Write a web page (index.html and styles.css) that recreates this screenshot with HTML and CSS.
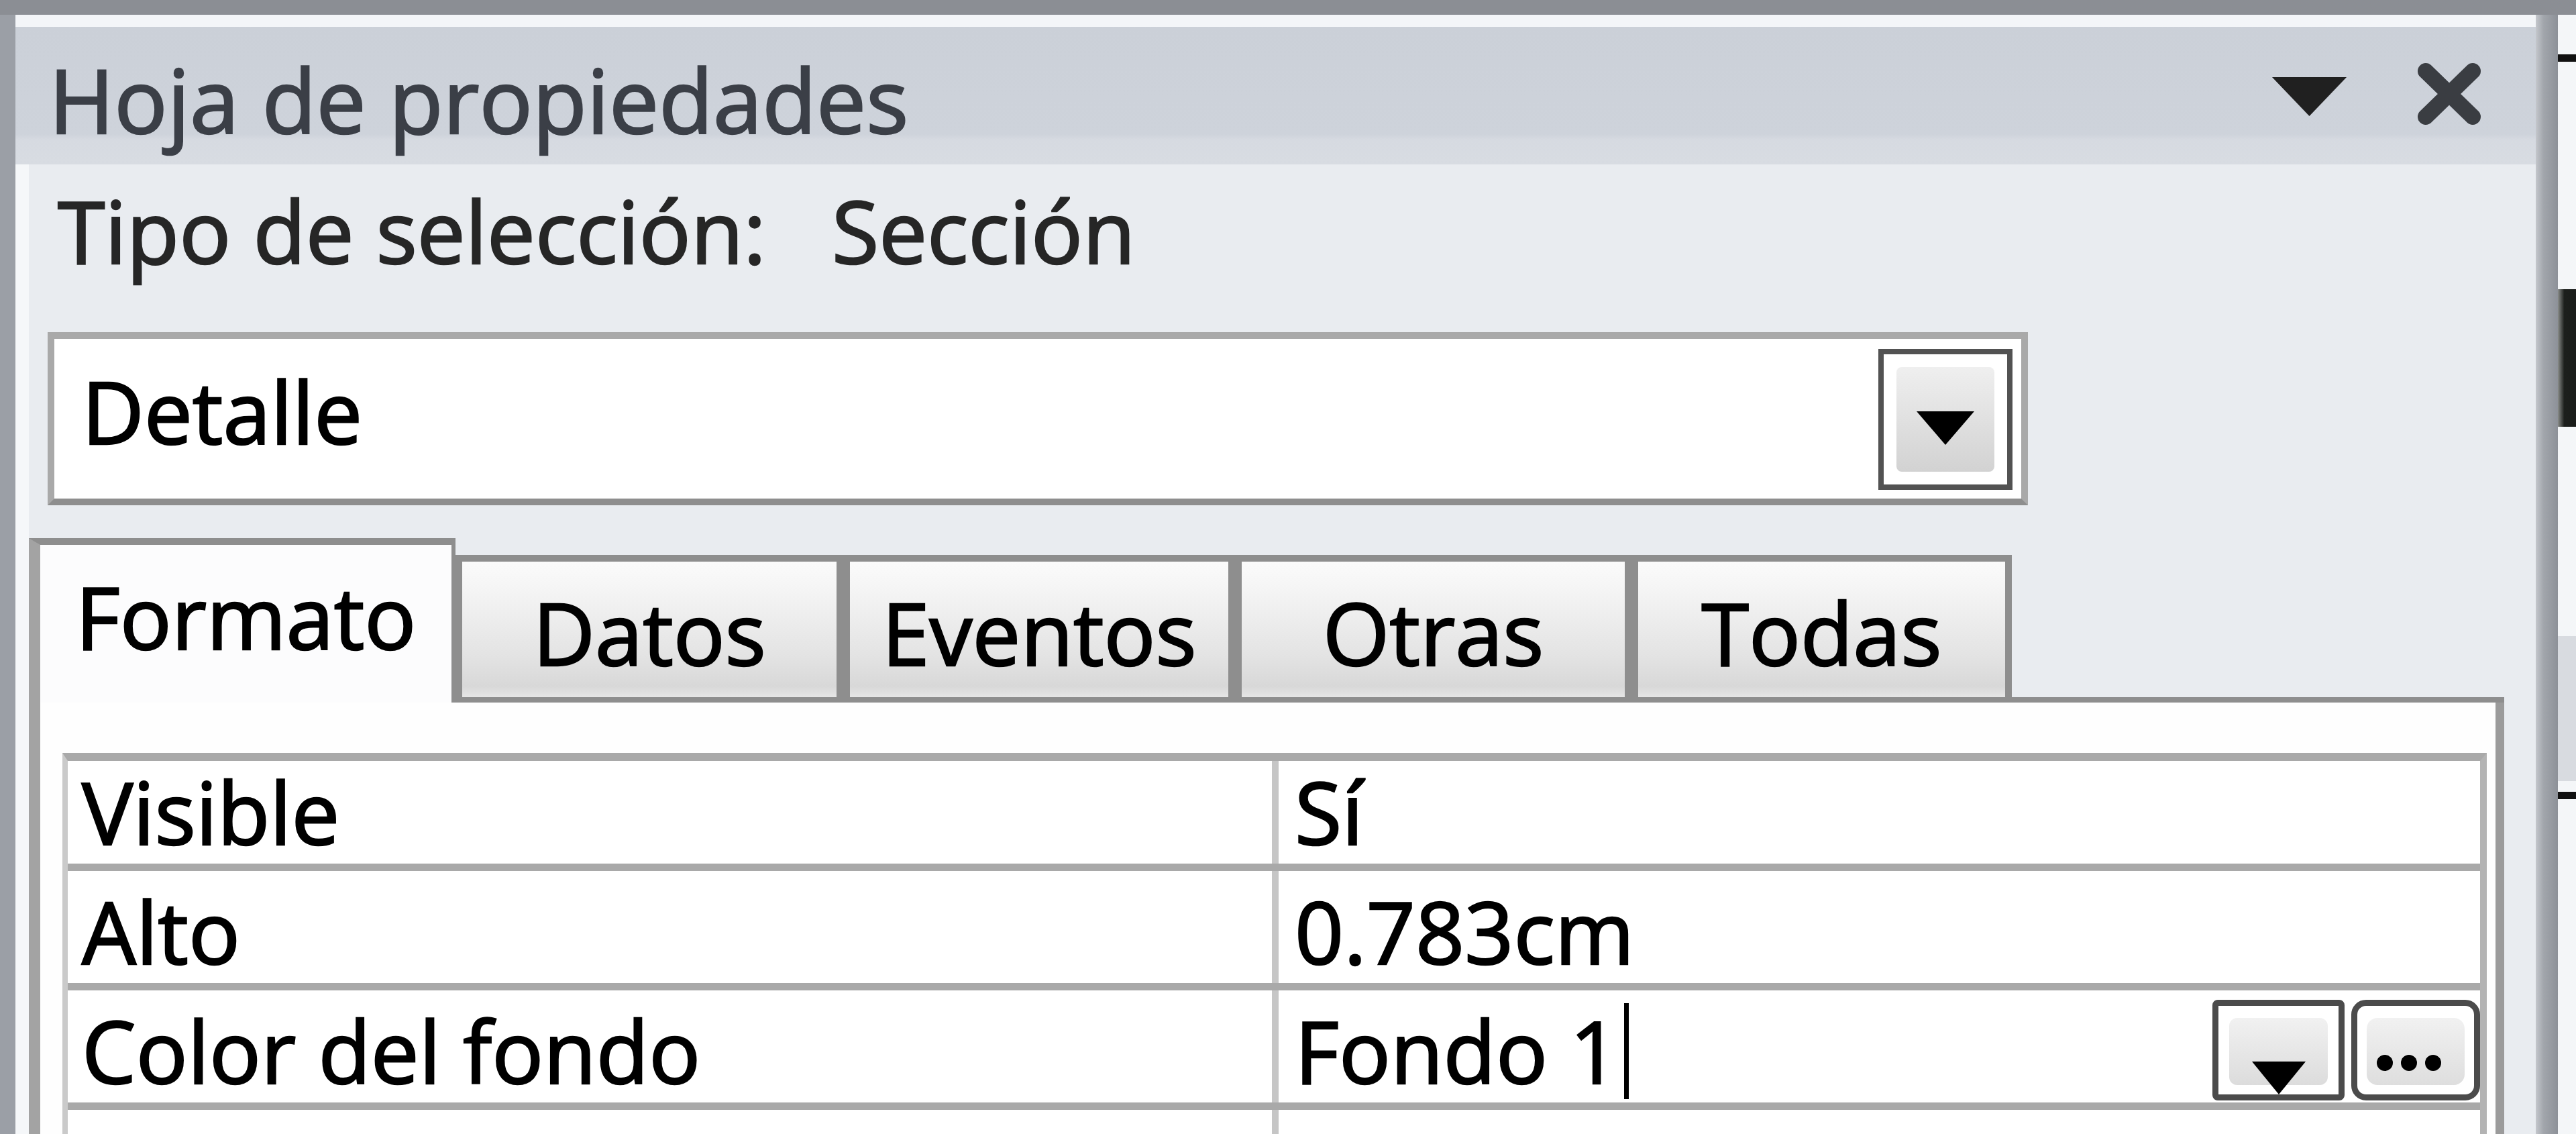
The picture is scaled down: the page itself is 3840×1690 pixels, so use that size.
FILE: index.html
```html
<!DOCTYPE html>
<html lang="es">
<head>
<meta charset="utf-8">
<title>Hoja de propiedades</title>
<link rel="stylesheet" href="styles.css">
</head>
<body>
<div class="topbar"></div>
<div class="main">
  <div class="lb"></div>
  <div class="inner">
    <div class="hdr">
      <div class="title">Hoja de propiedades</div>
      <div class="hdr-icons">
        <svg class="ico-menu" width="111" height="58" viewBox="0 0 111 58"><polygon points="0,0 111,0 55.5,58" fill="#202020"/></svg>
        <svg class="ico-close" width="98" height="94" viewBox="0 0 98 94"><path d="M14 13 L84 81 M84 13 L14 81" stroke="#3a3d42" stroke-width="24" stroke-linecap="round"/></svg>
      </div>
    </div>
    <div class="body">
      <div class="sel">Tipo de selección:<span class="sel-val">Sección</span></div>
      <div class="combo">
        <span class="combo-text">Detalle</span>
        <div class="combo-btn">
          <svg width="168" height="194" viewBox="0 0 168 194">
            <defs><linearGradient id="cg" x1="0" y1="0" x2="0" y2="1"><stop offset="0" stop-color="#efefef"/><stop offset="0.45" stop-color="#e2e2e2"/><stop offset="1" stop-color="#d2d2d2"/></linearGradient></defs>
            <rect x="19" y="19" width="146" height="156" rx="8" fill="url(#cg)"/>
            <polygon points="49,85 135,85 92,135" fill="#000"/>
          </svg>
        </div>
      </div>
      <div class="tabs">
        <div class="tab active">Formato</div>
        <div class="tab">Datos</div>
        <div class="tab">Eventos</div>
        <div class="tab">Otras</div>
        <div class="tab">Todas</div>
        <div class="tab-fill"></div>
      </div>
      <div class="page">
        <div class="grid">
          <div class="row first"><div class="cell key">Visible</div><div class="cell val">Sí</div></div>
          <div class="row"><div class="cell key">Alto</div><div class="cell val">0.783cm</div></div>
          <div class="row"><div class="cell key">Color del fondo</div><div class="cell val">Fondo 1<span class="caret"></span>
            <div class="btns">
              <div class="btn btn-dd">
                <svg width="179" height="132" viewBox="0 0 179 132">
                  <defs><linearGradient id="bg1" x1="0" y1="0" x2="0" y2="1"><stop offset="0" stop-color="#f1f1f1"/><stop offset="1" stop-color="#dcdcdc"/></linearGradient></defs>
                  <rect x="16" y="18" width="147" height="100" rx="12" fill="url(#bg1)"/>
                  <polygon points="50,83 130,83 90,132" fill="#000"/>
                </svg>
              </div>
              <div class="btn btn-dots">
                <svg width="174" height="132" viewBox="0 0 174 132">
                  <defs><linearGradient id="bg2" x1="0" y1="0" x2="0" y2="1"><stop offset="0" stop-color="#f1f1f1"/><stop offset="1" stop-color="#dedede"/></linearGradient></defs>
                  <rect x="14" y="18" width="146" height="100" rx="16" fill="url(#bg2)"/>
                  <circle cx="41" cy="85" r="12" fill="#000"/>
                  <circle cx="77" cy="85" r="12" fill="#000"/>
                  <circle cx="113" cy="85" r="12" fill="#000"/>
                </svg>
              </div>
            </div>
          </div></div>
          <div class="row last"><div class="cell key"></div><div class="cell val"></div></div>
        </div>
      </div>
    </div>
  </div>
  <div class="rb"></div>
  <div class="side">
    <div class="s-line s1"></div>
    <div class="s-block"></div>
    <div class="s-gray"></div>
    <div class="s-line s2"></div>
  </div>
</div>
</body>
</html>
```
FILE: styles.css
```css
html, body { margin: 0; padding: 0; }
body {
  width: 3840px;
  height: 1690px;
  overflow: hidden;
  background: #f4f6f8;
  font-family: "Open Sans", "Noto Sans", "DejaVu Sans", sans-serif;
  font-size: 128px;
  color: #0a0a0a;
  -webkit-text-stroke: 2.5px currentColor;
}
.topbar { height: 22px; background: #8b8e94; }
.main { display: flex; height: 1668px; }
.lb { width: 23px; flex: none; background: #9b9fa6; }
.inner {
  width: 3757px;
  flex: none;
  display: flex;
  flex-direction: column;
  background: #e9ecf0;
}
.hdr {
  flex: none;
  height: 205px;
  border-top: 18px solid #f3f5f8;
  background: linear-gradient(#cbd0d8 0%, #ced3db 78%, #d6dae1 82%, #d8dce2 100%);
  display: flex;
  align-items: flex-start;
}
.title {
  margin: 21px 0 0 50px;
  font-size: 132px;
  line-height: 174px;
  color: #3b3f47;
  white-space: nowrap;
}
.hdr-icons {
  margin-left: auto;
  display: flex;
  align-items: flex-start;
  gap: 104px;
  padding-right: 80px;
}
.ico-menu { margin-top: 75px; display: block; }
.ico-close { margin-top: 53px; display: block; }

.body {
  flex: 1;
  min-height: 0;
  border-left: 20px solid #f5f7f9;
  display: flex;
  flex-direction: column;
}
.sel {
  margin: 12px 0 0 43px;
  line-height: 174px;
  color: #262626;
  white-space: nowrap;
}
.sel-val { margin-left: 98px; }

.combo {
  flex: none;
  margin: 64px 0 0 28px;
  width: 2952px;
  height: 258px;
  box-sizing: border-box;
  border: 10px solid #a9a9a9;
  border-bottom-color: #8e8e8e;
  background: #fff;
  display: flex;
  align-items: flex-start;
}
.combo-text {
  flex: 1;
  padding: 21px 0 0 41px;
  line-height: 174px;
  color: #000;
}
.combo-btn {
  margin: 15px 13px 0 0;
  width: 200px;
  height: 210px;
  box-sizing: border-box;
  border: 8px solid #525252;
  background: #fff;
}
.combo-btn svg { display: block; }

.tabs {
  flex: none;
  margin-top: 49px;
  width: 3690px;
  height: 245px;
  display: grid;
  grid-template-columns: 636px 578px 584px 591px 567px 1fr;
  align-items: end;
}
.tab {
  box-sizing: border-box;
  height: 220px;
  border: 10px solid #8e8e8e;
  border-bottom-width: 8px;
  background: linear-gradient(#fbfbfb 0%, #f3f3f3 25%, #e3e3e3 70%, #d8d8d8 92%, #e6e6e6 100%);
  text-align: center;
  line-height: 174px;
  padding-top: 19px;
  color: #000;
  white-space: nowrap;
}
.tab.active {
  height: 245px;
  border: 0;
  border-left: 17px solid #a3a3a3;
  border-top: 10px solid #8e8e8e;
  border-right: 6px solid #8e8e8e;
  background: #fcfcfd;
  padding-top: 20px;
}
.tab-fill { height: 8px; background: #8e8e8e; }

.page {
  flex: 1;
  min-height: 0;
  width: 3690px;
  box-sizing: border-box;
  border-left: 17px solid #a3a3a3;
  border-right: 13px solid #9b9b9b;
  background: #fefefe;
  padding: 75px 13px 0 33px;
  overflow: hidden;
}
.grid {
  border-top: 12px solid #a9a9a9;
  border-left: 8px solid #cacaca;
  border-right: 10px solid #b3b3b3;
  height: 100%;
  box-sizing: border-box;
}
.row {
  display: grid;
  grid-template-columns: 1795px 1fr;
  height: 178px;
  box-sizing: border-box;
  border-bottom: 11px solid #a9a9a9;
  background: #fff;
}
.row.first { height: 164px; }
.row.last { border-bottom: 0; }
.cell {
  display: flex;
  align-items: flex-end;
  line-height: 150px;
  padding-bottom: 2px;
  white-space: nowrap;
  color: #000;
  min-width: 0;
}
.key { padding-left: 21px; }
.val { border-left: 10px solid #c6c6c6; padding-left: 24px; }
.caret {
  align-self: flex-start;
  margin: 19px 0 0 8px;
  width: 7px;
  height: 143px;
  background: #000;
}
.btns {
  margin-left: auto;
  align-self: flex-start;
  margin-top: 14px;
  display: flex;
  gap: 10px;
}
.btn {
  box-sizing: border-box;
  height: 150px;
  border: 9px solid #4b4b4b;
  background: #fff;
}
.btn svg { display: block; }
.btn-dd { width: 197px; border-radius: 8px; }
.btn-dots { width: 192px; border-radius: 22px; }

.rb {
  width: 33px;
  flex: none;
  background: linear-gradient(to right, #c4c7cc, #a2a6ac 35%, #8d9198);
}
.side {
  flex: 1;
  display: flex;
  flex-direction: column;
  background: #f4f6f8;
}
.s-line { height: 11px; background: #111; }
.s1 { margin-top: 59px; }
.s-block {
  margin-top: 339px;
  height: 205px;
  background: linear-gradient(to right, #8a8d8a, #1c1f1c 35%, #1a1c1a);
}
.s-gray { margin-top: 312px; height: 216px; background: #d8dbe0; }
.s2 { margin-top: 16px; }
```
